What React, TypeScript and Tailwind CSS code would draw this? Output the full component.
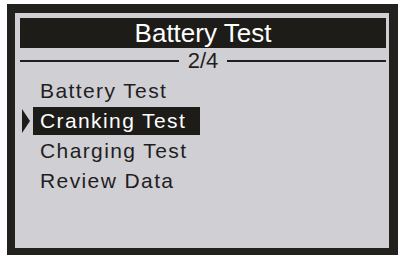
const items = ['Battery Test', 'Cranking Test', 'Charging Test', 'Review Data']
const selected = 1

export default function App() {
  return (
    <div
      className="w-[400px] h-[259px] bg-white pt-[4px] pl-[7px]"
      style={{ fontFamily: '"Liberation Sans", Arial, sans-serif' }}
    >
      <div className="w-[391px] h-[251px] bg-[#22211d] pt-[9px] pl-[8px]">
        <div className="w-[374px] h-[235px] bg-[#d0cfd3] pl-[5px] pt-[5px] flex flex-col">
          <div className="w-[366px] h-[30px] bg-[#1e1c19] text-white text-[26px] leading-[30px] text-center">
            Battery Test
          </div>

          <div className="mt-[2px] w-[366px] h-[22px] flex items-center gap-[9px]">
            <div className="flex-1 h-[2px] bg-[#1f1e22]" />
            <span className="text-[22px] leading-[22px] text-[#1f1e22]">2/4</span>
            <div className="flex-1 h-[2px] bg-[#1f1e22]" />
          </div>

          <div className="mt-[5px] flex flex-col gap-[2px]">
            {items.map((item, i) => {
              const isSel = i === selected
              return (
                <div key={item} className="flex items-center h-[28px]">
                  <div className="w-[13px] pl-[2px] flex items-center">
                    {isSel && (
                      <div className="w-0 h-0 border-y-[12px] border-y-transparent border-l-[8px] border-l-[#1e1c19]" />
                    )}
                  </div>
                  <div
                    className={`h-[28px] pl-[7px] pr-[14px] text-[21px] leading-[28px] tracking-[1.4px] ${
                      isSel ? 'bg-[#1e1c19] text-white' : 'text-[#1f1e22]'
                    }`}
                  >
                    {item}
                  </div>
                </div>
              )
            })}
          </div>
        </div>
      </div>
    </div>
  )
}
